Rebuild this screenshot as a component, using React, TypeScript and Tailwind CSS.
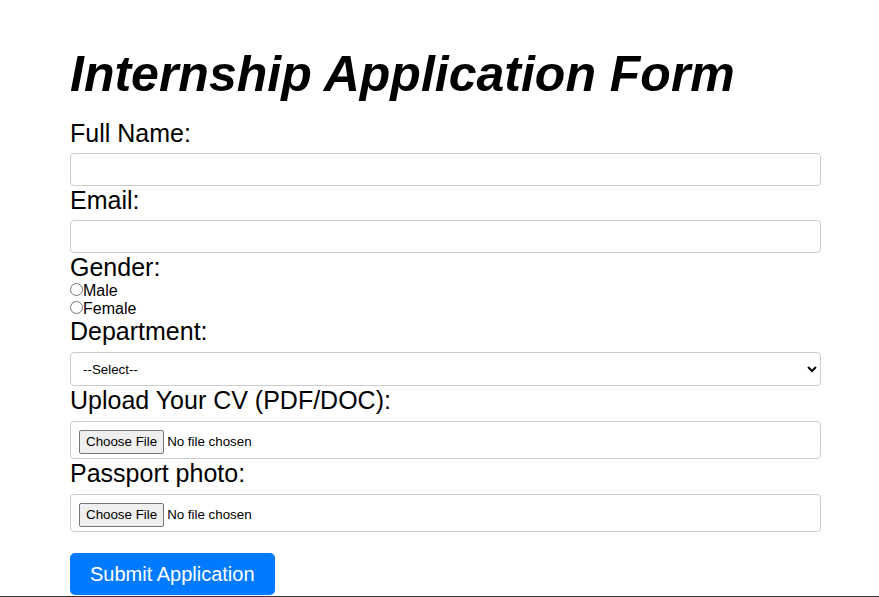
const fieldLabel = "block text-[25px] leading-[28px]";
const boxInput =
  "block w-full border border-[#ccc] rounded-[4px] bg-white px-2 text-[13.333px] text-black";

export default function App() {
  return (
    <div className="bg-white text-black font-['Liberation_Sans',Arial,sans-serif]">
      <form className="ml-[70px] w-[751px] pt-[47px]" onSubmit={(e) => e.preventDefault()}>
        <h1 className="text-[50px] leading-[55px] font-bold italic mb-[17px]">
          Internship Application Form
        </h1>

        {/* Full name */}
        <label htmlFor="fullname" className={fieldLabel}>
          Full Name:
        </label>
        <input id="fullname" type="text" className={`${boxInput} h-[33px] mt-[6px]`} />

        {/* Email */}
        <label htmlFor="email" className={fieldLabel}>
          Email:
        </label>
        <input id="email" type="email" className={`${boxInput} h-[33px] mt-[6px]`} />

        {/* Gender */}
        <span className={fieldLabel}>Gender:</span>
        <div className="text-[16px] leading-[18px] pt-px">
          <label className="block">
            <input type="radio" name="gender" value="male" className="m-0 w-[13px] h-[13px]" />
            Male
          </label>
          <label className="block -mb-px">
            <input type="radio" name="gender" value="female" className="m-0 w-[13px] h-[13px]" />
            Female
          </label>
        </div>

        {/* Department */}
        <label htmlFor="department" className={fieldLabel}>
          Department:
        </label>
        <select
          id="department"
          defaultValue=""
          className={`${boxInput} h-[34px] mt-[7px] appearance-auto`}
        >
          <option value="">--Select--</option>
          <option>Engineering</option>
          <option>Marketing</option>
          <option>Finance</option>
          <option>Human Resources</option>
        </select>

        {/* CV */}
        <label htmlFor="cv" className={fieldLabel}>
          Upload Your CV (PDF/DOC):
        </label>
        <input
          id="cv"
          type="file"
          accept=".pdf,.doc,.docx"
          className={`${boxInput} h-[38px] mt-[7px] py-2 file:mr-[3px] file:border file:border-[#767676] file:bg-[#efefef] file:rounded-[2px] file:px-[6px] file:py-[1px] file:text-black`}
        />

        {/* Photo */}
        <label htmlFor="photo" className={fieldLabel}>
          Passport photo:
        </label>
        <input
          id="photo"
          type="file"
          accept="image/*"
          className={`${boxInput} h-[38px] mt-[7px] py-2 file:mr-[3px] file:border file:border-[#767676] file:bg-[#efefef] file:rounded-[2px] file:px-[6px] file:py-[1px] file:text-black`}
        />

        <button
          type="submit"
          className="block mt-[21px] h-[42px] px-5 bg-[#007bff] text-white text-[20px] rounded-[5px]"
        >
          Submit Application
        </button>
      </form>

      <footer className="mt-[1px] h-[40px] bg-[#333]" />
    </div>
  );
}
